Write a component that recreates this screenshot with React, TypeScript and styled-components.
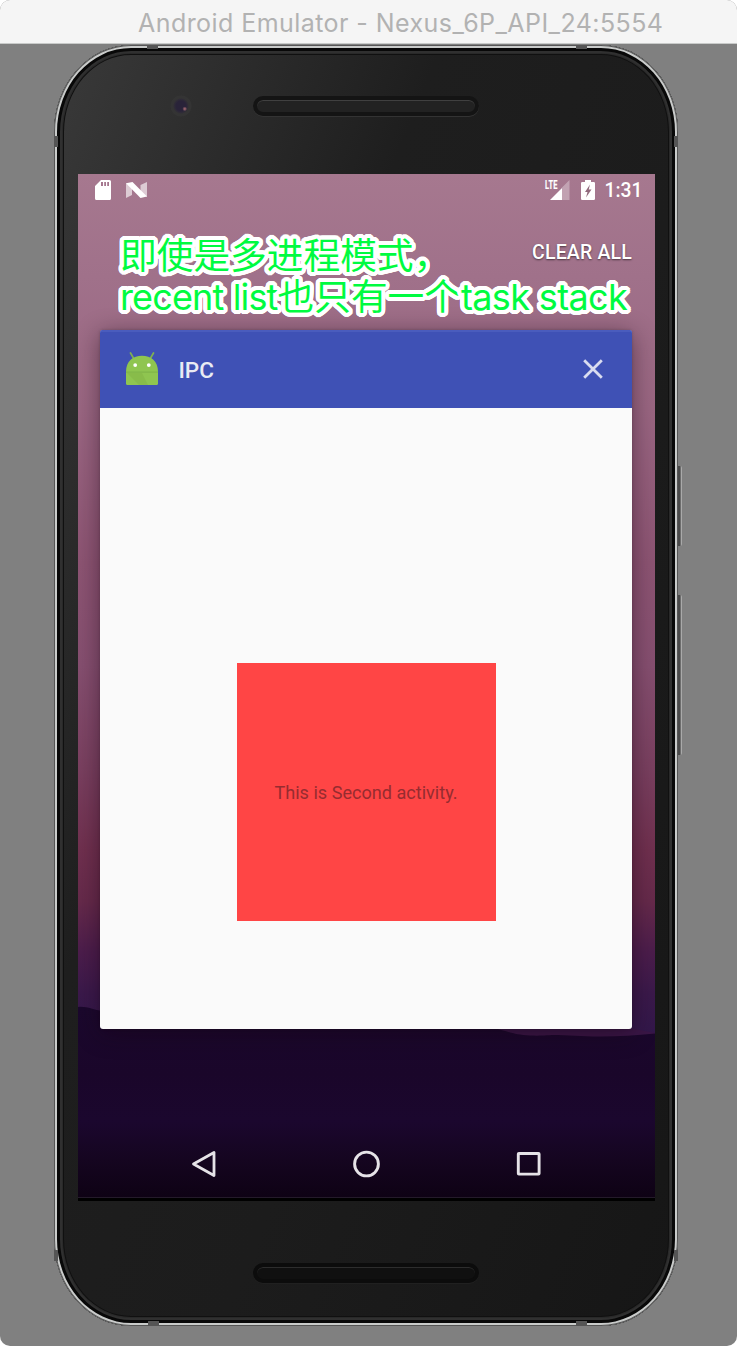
import React from "react";
import styled, { createGlobalStyle } from "styled-components";

const GlobalStyle = createGlobalStyle`
  * { box-sizing: border-box; }
  body { margin: 0; background: #fff; }
`;

const Window = styled.main`
  width: 737px;
  height: 1346px;
  border-radius: 10px;
  overflow: hidden;
  background: #808080;
  display: flex;
  flex-direction: column;
  align-items: flex-start;
`;

const TitleBar = styled.header`
  width: 100%;
  height: 44px;
  flex: none;
  display: flex;
  align-items: center;
  padding: 3px 0 0 138px;
  background: #f5f5f5;
  border-bottom: 1px solid #c8cac9;
`;

const Title = styled.h1`
  margin: 0;
  font: 400 25px/30px Inter, sans-serif;
  letter-spacing: 0.44px;
  white-space: nowrap;
  color: #b2b2b2;
`;

const Phone = styled.section`
  position: relative;
  width: 624px;
  height: 1281px;
  margin: 1px 0 0 54px;
  padding: 0 23px 0 24px;
  border-radius: 77px / 87px;
  background: linear-gradient(112deg, #3a3a3a 0, #2c2c2c 17%, #1e1e1e 34%, #1c1c1c 60%, #161616 100%);
  box-shadow: inset 0 0 0 1px #555, inset 0 0 0 3px #c9cbca, inset 0 0 0 6px #080808,
    inset 0 0 0 8px #303030, inset 0 0 0 9px #292929, inset 0 0 0 10px #101010;
  display: flex;
  flex-direction: column;
`;

const Band = styled.i<{ $x: number; $y: number; $upright?: boolean }>`
  position: absolute;
  left: ${(p) => p.$x}px;
  top: ${(p) => p.$y}px;
  width: ${(p) => (p.$upright ? 4 : 11)}px;
  height: ${(p) => (p.$upright ? 11 : 4)}px;
  background: #555;
`;

const SideKey = styled.i<{ $y: number; $length: number }>`
  position: absolute;
  left: 624px;
  top: ${(p) => p.$y}px;
  width: 4px;
  height: ${(p) => p.$length}px;
  border-radius: 0 2px 2px 0;
  background: linear-gradient(90deg, #494949 0 55%, #a9a9a9 75%);
`;

const Bezel = styled.div<{ $height: number; $top: number }>`
  position: relative;
  height: ${(p) => p.$height}px;
  padding-top: ${(p) => p.$top}px;
  flex: none;
  display: flex;
  justify-content: center;
  align-items: flex-start;
`;

const Speaker = styled.div<{ $dark?: boolean }>`
  width: 226px;
  height: 20px;
  margin-left: -1px;
  border-radius: 10px;
  border: 4px solid ${(p) => (p.$dark ? "#0c0c0c" : "#141414")};
  background: ${(p) => (p.$dark ? "#101010" : "#222")};
  box-shadow: inset 0 1px 0 ${(p) => (p.$dark ? "#2d2d2d" : "#404040")},
    0 1px 0 ${(p) => (p.$dark ? "#202020" : "#333")};
`;

const Camera = styled.i`
  position: absolute;
  left: 92px;
  top: 50px;
  width: 22px;
  height: 22px;
  border-radius: 50%;
  background: radial-gradient(circle at 67% 63%, #94606a 0 0.6px, transparent 2.4px),
    radial-gradient(circle, #292339 0 5px, #302d36 7px, #343434 8px 10px, transparent 11px);
`;

const Screen = styled.div`
  position: relative;
  width: 577px;
  height: 1027px;
  flex: none;
  overflow: hidden;
  display: flex;
  flex-direction: column;
  background: linear-gradient(#a6788f 0, #a0718a 10%, #9a6682 23%, #8d5473 38%, #864f70 48%, #7a4060 58%, #70304f 66%, #662a4b 71%, #4c1d4c 76%, #3b194b 80%, #32174a 84%, #32174a 100%);
  border-bottom: 3px solid #000;
`;

const Hills = styled.svg`
  position: absolute;
  left: 0;
  top: 820px;
`;

const StatusBar = styled.div`
  position: relative;
  height: 32px;
  flex: none;
  display: flex;
  justify-content: space-between;
  padding: 0 12.5px 0 17px;
`;

const StatusGroup = styled.div<{ $gap: number }>`
  display: flex;
  align-items: center;
  gap: ${(p) => p.$gap}px;
  svg { display: block; }
`;

const Clock = styled.time`
  margin-left: -2px;
  font: 500 19.3px/32px Roboto, sans-serif;
  color: #fff;
  padding-top: 2px;
`;

const ClearAll = styled.button`
  position: relative;
  align-self: flex-end;
  margin: 33px 23px 0 0;
  padding: 0;
  border: 0;
  background: none;
  font: 500 19.5px/28px Roboto, sans-serif;
  letter-spacing: 0.18px;
  white-space: nowrap;
  color: #fff;
  text-shadow: 0 1px 2px rgba(0, 0, 0, 0.55);
`;

/* A round-cornered outline: copies of the text on a ring around it. */
const outline = (radius: number, color: string) =>
  Array.from({ length: 32 }, (_, i) => {
    const a = (i / 32) * Math.PI * 2;
    return `${(Math.cos(a) * radius).toFixed(2)}px ${(Math.sin(a) * radius).toFixed(2)}px 0 ${color}`;
  }).join(", ");

const Note = styled.p`
  position: absolute;
  left: 42px;
  top: 61px;
  margin: 0;
  font: 400 36.7px/41px Inter, "Noto Sans CJK SC", sans-serif;
  white-space: nowrap;
  color: #00fb40;
  text-shadow: ${outline(4, "#fff")}, ${outline(2, "#fff")};
`;

const Latin = styled.span<{ $spacing: number }>`
  font-size: 36px;
  letter-spacing: ${(p) => p.$spacing}px;
`;

const TaskCard = styled.article`
  position: relative;
  width: 532px;
  height: 699px;
  margin: 63px 0 0 22px;
  flex: none;
  display: flex;
  flex-direction: column;
  border-radius: 3px;
  overflow: hidden;
  background: #fafafa;
`;

const CardShade = styled.div`
  position: relative;
  display: flex;
  flex: none;
  &::before {
    content: "";
    position: absolute;
    left: 22px;
    top: 63px;
    width: 532px;
    height: 699px;
    border-radius: 3px;
    box-shadow: 0 4px 24px rgba(20, 5, 15, 0.45), 0 0 3px rgba(0, 0, 0, 0.2);
  }
`;

const CardHeader = styled.div`
  height: 78px;
  flex: none;
  display: flex;
  align-items: center;
  padding: 0 27px 1px 26px;
  background: #3f51b5;
  box-shadow: inset 0 2px 0 #4a5cbd;
`;

const AppName = styled.h2`
  margin: 2px auto 0 20.5px;
  font: 500 22.5px/30px Roboto, sans-serif;
  color: #e9ebf3;
`;

const Preview = styled.div`
  flex: 1;
  display: flex;
  justify-content: center;
  align-items: flex-start;
  padding-top: 255px;
`;

const RedPanel = styled.div`
  width: 259px;
  height: 258px;
  padding-top: 2px;
  display: flex;
  align-items: center;
  justify-content: center;
  background: #ff4545;
  font: 400 18.1px/24px Roboto, sans-serif;
  white-space: nowrap;
  color: #962c30;
`;

const NavBar = styled.nav`
  position: relative;
  margin-top: auto;
  height: 68px;
  flex: none;
  display: flex;
  justify-content: center;
  gap: 130px;
  border-bottom: 1px solid #241a2a;
  svg { display: block; }
`;

function Wallpaper() {
  return (
    <Hills width="577" height="204" viewBox="0 0 577 204">
      <defs>
        <linearGradient id="ground" x2="0" y2="1">
          <stop offset="0" stopColor="#1b082d" />
          <stop offset=".35" stopColor="#1a062a" />
          <stop offset=".6" stopColor="#1b072e" />
          <stop offset=".8" stopColor="#150520" />
          <stop offset="1" stopColor="#0e0214" />
        </linearGradient>
      </defs>
      <path d="M300 34H552L577 39V60H300z" fill="#3a1646" />
      <path d="M0 13C9 12 15 16 25 17V34H415C430 37 436 41 452 41.5C465 42 468 41 480 41L515 42.5Q545 43 577 39.5V204H0Z" fill="url(#ground)" />
    </Hills>
  );
}

function SdCardIcon() {
  return (
    <svg width="16" height="20" viewBox="0 0 16 20">
      <path fillRule="evenodd" fill="#fff" d="M6 0H14.5Q16 0 16 1.5V18.5Q16 20 14.5 20H1.5Q0 20 0 18.5V6ZM6 2V6H8V2ZM9.2 2V6H11V2ZM12.2 2V6H14V2Z" />
    </svg>
  );
}

function NougatIcon() {
  return (
    <svg width="22" height="16" viewBox="-1 0 22 16">
      <path d="M0 1L6 5V13L0 16ZM14.5 3L21 0V15L14.5 11Z" fill="#fff" opacity=".62" />
      <path d="M0 1.2L6.5 0L21 14.5L14.5 16Z" fill="#fff" />
    </svg>
  );
}

const LteMark = styled.span`
  position: absolute;
  left: 0.5px;
  top: -1.5px;
  font: 700 12px/13px Roboto, sans-serif;
  letter-spacing: 0.4px;
  color: #fff;
  -webkit-text-stroke: 0.2px #fff;
  transform: scaleX(0.62);
  transform-origin: left;
`;

const Signal = styled.div`
  position: relative;
  width: 25px;
  height: 20px;
`;

function SignalIcon() {
  return (
    <Signal>
      <svg width="25" height="20" viewBox="0 0 25 20">
        <path d="M17 7.5L24.5 0V20H17Z" fill="#fff" opacity=".32" />
        <path d="M5 20L17 8V20Z" fill="#fff" />
      </svg>
      <LteMark>LTE</LteMark>
    </Signal>
  );
}

function BatteryIcon() {
  return (
    <svg width="14" height="20" viewBox="0 0 14 20">
      <path d="M4 0H10V2H12.7Q14 2 14 3.3V18.7Q14 20 12.7 20H1.3Q0 20 0 18.7V3.3Q0 2 1.3 2H4Z" fill="#fff" />
      <path d="M9 4.5L4 12H6.5L5 17.5L10.5 9.5H7.7Z" fill="#916a7d" />
    </svg>
  );
}

function AndroidIcon() {
  return (
    <svg width="32" height="34" viewBox="0 0 32 34">
      <path d="M4.5 1L8 7M27.5 1L24 7" stroke="#7fb151" strokeWidth="1.7" strokeLinecap="round" />
      <path d="M0 19.5C0 9.5 7 3.8 16 3.8S32 9.5 32 19.5V31.5Q32 33 30.5 33H1.5Q0 33 0 31.5Z" fill="#8fc550" />
      <path d="M0 19.5H32V20.7H0Z" fill="#80b548" />
      <path d="M1 21L13 33H22L16 21Z" fill="#88bc4a" />
      <circle cx="9.2" cy="13.1" r="1.9" fill="#fff" />
      <circle cx="22.8" cy="13.1" r="1.9" fill="#fff" />
    </svg>
  );
}

export default function App() {
  return (
    <>
      <GlobalStyle />
      <Window>
        <TitleBar>
          <Title>Android Emulator - Nexus_6P_API_24:5554</Title>
        </TitleBar>
        <Phone>
          <Band $x={93} $y={0} />
          <Band $x={522} $y={0} />
          <Band $x={94} $y={1276} />
          <Band $x={522} $y={1276} />
          <Band $x={0} $y={91} $upright />
          <Band $x={620} $y={91} $upright />
          <Band $x={0} $y={1205} $upright />
          <Band $x={620} $y={1205} $upright />
          <SideKey $y={421} $length={80} />
          <SideKey $y={550} $length={160} />
          <Bezel $height={129} $top={51}>
            <Camera />
            <Speaker />
          </Bezel>
          <Screen>
            <Wallpaper />
            <StatusBar>
              <StatusGroup $gap={14}>
                <SdCardIcon />
                <NougatIcon />
              </StatusGroup>
              <StatusGroup $gap={11.5}>
                <SignalIcon />
                <BatteryIcon />
                <Clock>1:31</Clock>
              </StatusGroup>
            </StatusBar>
            <ClearAll>CLEAR ALL</ClearAll>
            <CardShade>
              <TaskCard>
                <CardHeader>
                  <AndroidIcon />
                  <AppName>IPC</AppName>
                  <svg width="24" height="24" viewBox="0 0 24 24">
                    <path d="M3.2 3.2L20.8 20.8M20.8 3.2L3.2 20.8" stroke="#d9dcf0" strokeWidth="2.8" />
                  </svg>
                </CardHeader>
                <Preview>
                  <RedPanel>This is Second activity.</RedPanel>
                </Preview>
              </TaskCard>
            </CardShade>
            <Note>
              即使是多进程模式，
              <br />
              <Latin $spacing={-0.85}>recent list</Latin>也只有一个<Latin $spacing={-0.65}>task stack</Latin>
            </Note>
            <NavBar>
              <svg width="32" height="68" viewBox="0 0 32 68">
                <path d="M4.5 34L25 22.5V45.5Z" fill="none" stroke="#e6e3e8" strokeWidth="2.8" strokeLinejoin="round" />
              </svg>
              <svg width="32" height="68" viewBox="0 0 32 68">
                <circle cx="15.5" cy="34" r="11.9" fill="none" stroke="#e6e3e8" strokeWidth="2.9" />
              </svg>
              <svg width="32" height="68" viewBox="0 0 32 68">
                <rect x="5.3" y="23.5" width="20.8" height="20.6" rx="0.6" fill="none" stroke="#e6e3e8" strokeWidth="2.9" />
              </svg>
            </NavBar>
          </Screen>
          <Bezel $height={80} $top={62}>
            <Speaker $dark />
          </Bezel>
        </Phone>
      </Window>
    </>
  );
}
